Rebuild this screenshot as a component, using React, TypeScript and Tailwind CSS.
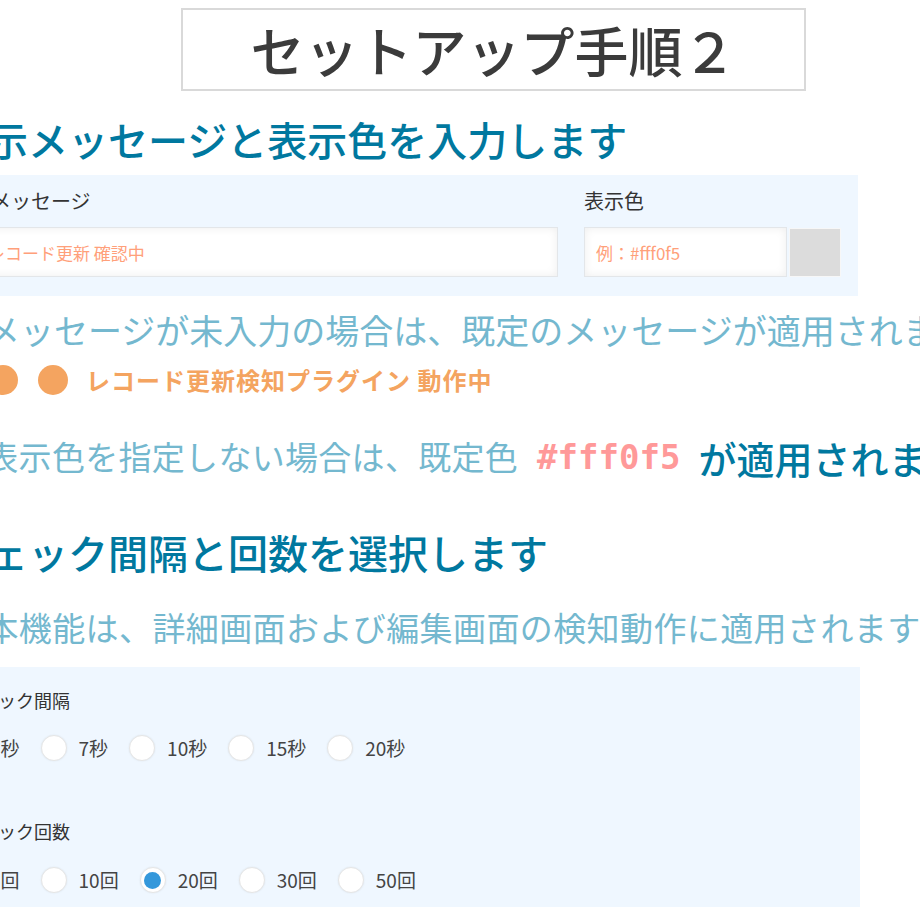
import React from "react";

const intervals = ["5秒", "7秒", "10秒", "15秒", "20秒"];
const counts = ["5回", "10回", "20回", "30回", "50回"];

function Radio({ checked }: { checked?: boolean }) {
  return (
    <span className="w-[26px] h-[26px] shrink-0 rounded-full bg-white border border-[#e6e6e6] shadow-[0_0_2px_rgba(0,0,0,0.08)] flex items-center justify-center">
      {checked && <span className="w-[17px] h-[17px] rounded-full bg-[#3498db]" />}
    </span>
  );
}

function RadioRow({ items, selected }: { items: string[]; selected?: string }) {
  return (
    <div className="flex items-center h-[26px]">
      {items.map((it) => (
        <label key={it} className="flex items-center mr-[21px]">
          <Radio checked={it === selected} />
          <span className="ml-[12px] text-[19px] leading-[26px] text-[#444]">{it}</span>
        </label>
      ))}
    </div>
  );
}

export default function App() {
  return (
    <div className="w-[920px] h-[920px] overflow-hidden bg-white font-['Noto_Sans_CJK_JP',sans-serif]">
      <div className="-ml-[48px] w-[1100px] flex flex-col whitespace-nowrap">
        {/* title */}
        <div className="ml-[229px] mt-[8px] w-[625px] h-[83px] border-2 border-[#d9d9d9] flex items-center justify-center text-[54px] leading-none font-medium text-[#3b3b3b]">
          セットアップ手順２
        </div>

        <h1 className="-ml-[4px] mt-[24px] text-[40px] leading-[48px] font-medium text-[#00789f]">
          表示メッセージと表示色を入力します
        </h1>

        <div className="-ml-[15px] mt-[12px] w-[921px] bg-[#eff7ff] pl-[10px] pr-[17px] pt-[13px] pb-[19px] flex">
          <div className="w-[611px] flex flex-col">
            <div className="ml-[4px] text-[20px] leading-[26px] text-[#333]">表示メッセージ</div>
            <input
              readOnly
              placeholder="例：レコード更新 確認中"
              className="mt-[13px] h-[50px] w-[611px] pl-[6px] bg-white border border-[#e3e6e9] shadow-[inset_0_0_10px_rgba(0,0,0,0.07)] text-[17px] outline-none placeholder:text-[#ffa07a]"
            />
          </div>
          <div className="ml-[26px] flex flex-col">
            <div className="text-[20px] leading-[26px] text-[#333]">表示色</div>
            <div className="mt-[13px] flex items-center">
              <input
                readOnly
                placeholder="例：#fff0f5"
                className="h-[50px] w-[203px] pl-[11px] bg-white border border-[#e3e6e9] shadow-[inset_0_0_10px_rgba(0,0,0,0.07)] text-[17px] outline-none placeholder:text-[#ffa07a]"
              />
              <div className="ml-[2px] w-[52px] h-[49px] bg-[#dcdcdc] border border-[#f7f7f7]" />
            </div>
          </div>
        </div>

        <p className="mt-[14px] text-[34px] leading-[40px] text-[#74b8cf]">
          ※メッセージが未入力の場合は、既定のメッセージが適用されます
        </p>

        <div className="mt-[15px] ml-[36px] flex items-center h-[30px]">
          <span className="w-[30px] h-[30px] rounded-full bg-[#f4a460]" />
          <span className="ml-[20px] w-[30px] h-[30px] rounded-full bg-[#f4a460]" />
          <span className="ml-[18px] text-[24px] tracking-[1px] font-bold text-[#f4a460]">
            レコード更新検知プラグイン 動作中
          </span>
        </div>

        <div className="mt-[38px] flex items-center h-[48px]">
          <span className="text-[33px] tracking-[0.3px] text-[#74b8cf]">※表示色を指定しない場合は、既定色</span>
          <span className="ml-[19px] text-[34px] font-bold text-[#ff9999] font-['DejaVu_Sans_Mono',monospace]">
            #fff0f5
          </span>
          <span className="ml-[18px] text-[38px] font-medium text-[#00789f]">が適用されます</span>
        </div>

        <h2 className="-ml-[4px] mt-[47px] text-[40px] leading-[48px] font-medium text-[#00789f]">
          チェック間隔と回数を選択します
        </h2>

        <p className="mt-[31px] text-[33px] tracking-[0.4px] leading-[40px] text-[#74b8cf]">
          ※本機能は、詳細画面および編集画面の検知動作に適用されます
        </p>

        <div className="-ml-[12px] mt-[20px] w-[920px] bg-[#eff7ff] pl-[12px] pt-[20px] pb-[14px] flex flex-col">
          <div className="ml-[10px] text-[18px] leading-[26px] text-[#333]">チェック間隔</div>
          <div className="mt-[22px]">
            <RadioRow items={intervals} />
          </div>
          <div className="ml-[10px] mt-[57px] text-[18px] leading-[26px] text-[#333]">チェック回数</div>
          <div className="mt-[23px]">
            <RadioRow items={counts} selected="20回" />
          </div>
        </div>
      </div>
    </div>
  );
}
